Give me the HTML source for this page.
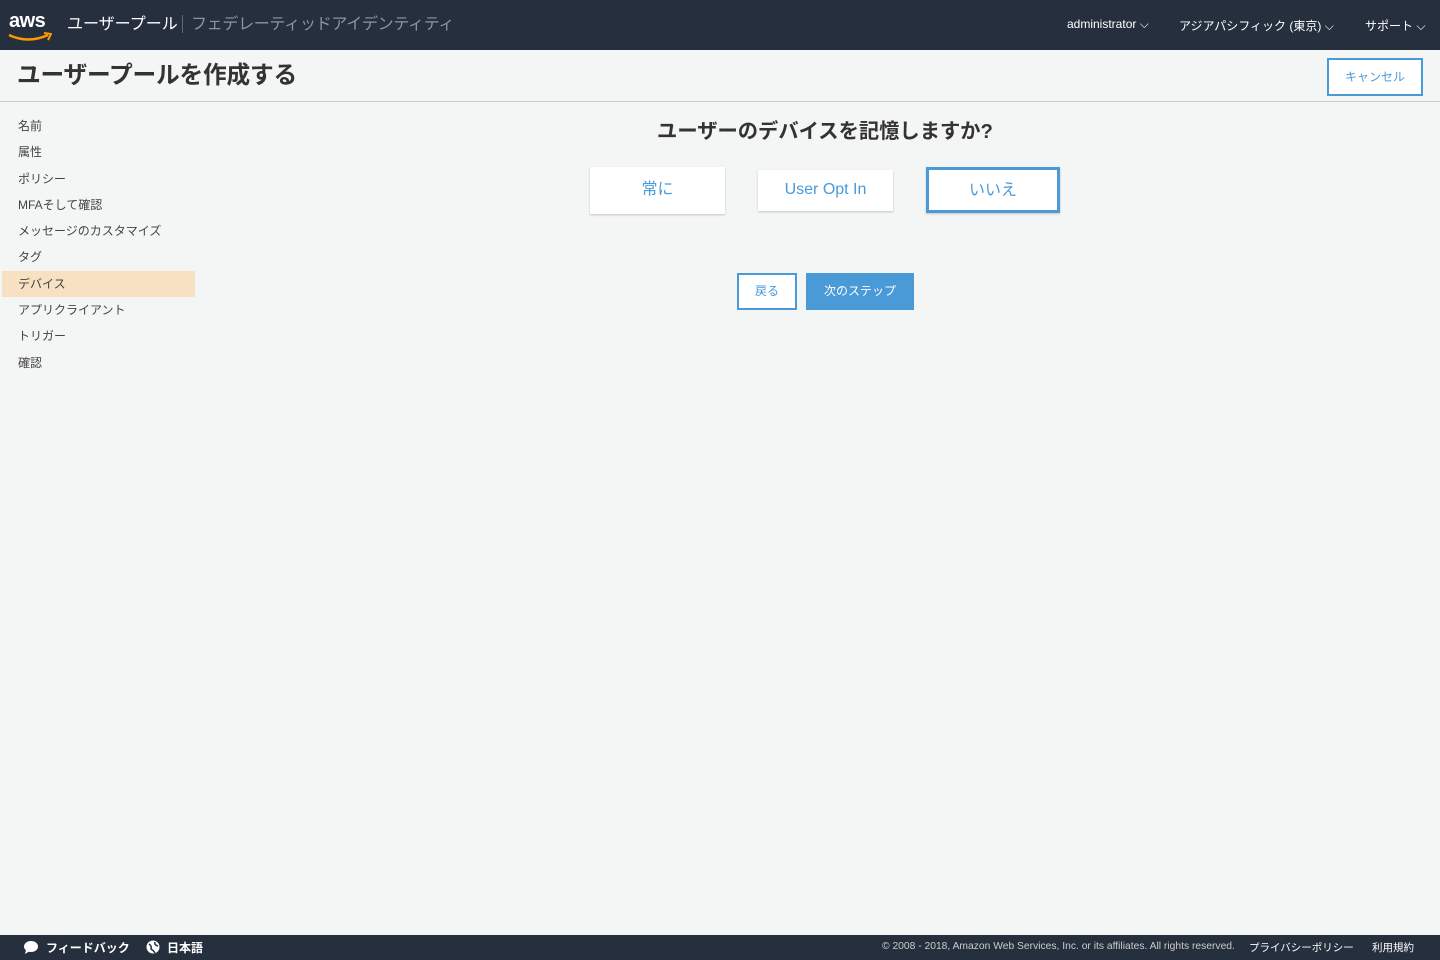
<!DOCTYPE html>
<html><head><meta charset="utf-8"><style>
*{margin:0;padding:0;box-sizing:border-box}
body{width:1440px;height:960px;background:#f4f5f5;font-family:"Liberation Sans","Noto Sans CJK JP",sans-serif;position:relative;overflow:hidden;color:#333}
.top{position:absolute;left:0;top:0;width:1440px;height:50px;background:#252f3e}
.top .t{position:absolute;top:13px;font-size:16px;color:#fff;line-height:24px}
.top .r{position:absolute;top:17px;font-size:12px;color:#fff}
.hdr{position:absolute;top:50px;left:0;width:1440px;height:52px;border-bottom:1px solid #ccc;background:#f4f5f5}
.hdr h1{position:absolute;left:17px;top:10px;font-size:23.7px;line-height:32px;font-weight:bold;color:#333;letter-spacing:-0.2px}
.cancel{position:absolute;right:17px;top:8px;width:96px;height:38px;border:2px solid #4a9ad8;background:#fff;color:#4a9ad8;font-size:12px;text-align:center;line-height:34px}
.nav{position:absolute;left:2px;top:113px;width:193px}
.nav div{height:26.3px;line-height:26px;padding-left:16px;font-size:12px;color:#444}
.nav .on{background:#f7e1c2}
h2{position:absolute;left:0;width:1650px;top:114px;text-align:center;font-size:20.3px;font-weight:bold;color:#333}
.opt{position:absolute;background:#fff;box-shadow:0 1px 2px rgba(0,0,0,.2);color:#4a9ad8;font-size:16px;text-align:center}
.foot{position:absolute;left:0;top:935px;width:1440px;height:25px;background:#252f3e;color:#fff;font-size:11px}
.foot span{position:absolute;top:5px}
</style></head><body>
<div class="top">
<div style="position:absolute;left:9px;top:11px;color:#fff;font-size:20px;font-weight:bold;letter-spacing:-0.5px;line-height:20px">aws</div>
<svg style="position:absolute;left:8px;top:32px" width="44" height="12"><path d="M1 3 Q20 12 40 3" stroke="#f90" stroke-width="2.5" fill="none"/><path d="M36 1 L43 2 L40 8" stroke="#f90" stroke-width="2" fill="none"/></svg>
<div class="t" style="left:67px">ユーザープール</div>
<div style="position:absolute;left:182px;top:15px;width:1px;height:18px;background:#666"></div>
<div class="t" style="left:191px;color:#8f959c;letter-spacing:-0.3px">フェデレーティッドアイデンティティ</div>
<div class="r" style="left:1067px">administrator ⌵</div>
<div class="r" style="left:1179px">アジアパシフィック (東京) ⌵</div>
<div class="r" style="left:1365px">サポート ⌵</div>
</div>
<div class="hdr"><h1>ユーザープールを作成する</h1><div class="cancel">キャンセル</div></div>
<div class="nav">
<div>名前</div><div>属性</div><div>ポリシー</div><div>MFAそして確認</div><div>メッセージのカスタマイズ</div><div>タグ</div><div class="on">デバイス</div><div>アプリクライアント</div><div>トリガー</div><div>確認</div>
</div>
<h2>ユーザーのデバイスを記憶しますか?</h2>
<div class="opt" style="left:590px;top:167px;width:135px;height:47px;line-height:45px">常に</div>
<div class="opt" style="left:758px;top:170px;width:135px;height:41px;line-height:40px">User Opt In</div>
<div class="opt" style="left:926px;top:167px;width:134px;height:46px;line-height:42px;border:3px solid #4a9ad8">いいえ</div>
<div style="position:absolute;left:737px;top:273px;width:60px;height:37px;border:2px solid #4a9ad8;background:#fff;color:#4a9ad8;font-size:12px;text-align:center;line-height:33px">戻る</div>
<div style="position:absolute;left:806px;top:273px;width:108px;height:37px;background:#4a9ad8;color:#fff;font-size:12px;text-align:center;line-height:37px">次のステップ</div>
<div class="foot">
<svg style="position:absolute;left:23px;top:5px" width="16" height="15"><ellipse cx="8" cy="6.5" rx="7" ry="5.5" fill="#fff"/><path d="M3 10 L2 14 L7 11Z" fill="#fff"/></svg>
<span style="left:46px;font-weight:bold;font-size:12px;top:4px">フィードバック</span>
<svg style="position:absolute;left:146px;top:5px" width="14" height="14"><circle cx="7" cy="7" r="6.5" fill="#fff"/><path d="M3 4 Q6 6 5 9 Q8 11 9 13 M9 2 Q8 5 12 6" stroke="#252f3e" stroke-width="1.5" fill="none"/></svg>
<span style="left:167px;font-weight:bold;font-size:12px;top:4px">日本語</span>
<span style="left:882px;color:#ccc;font-size:10.3px;top:6px">© 2008 - 2018, Amazon Web Services, Inc. or its affiliates. All rights reserved.</span>
<span style="left:1249px;font-size:10.5px">プライバシーポリシー</span>
<span style="left:1372px;font-size:10.5px">利用規約</span>
</div>
</body></html>
